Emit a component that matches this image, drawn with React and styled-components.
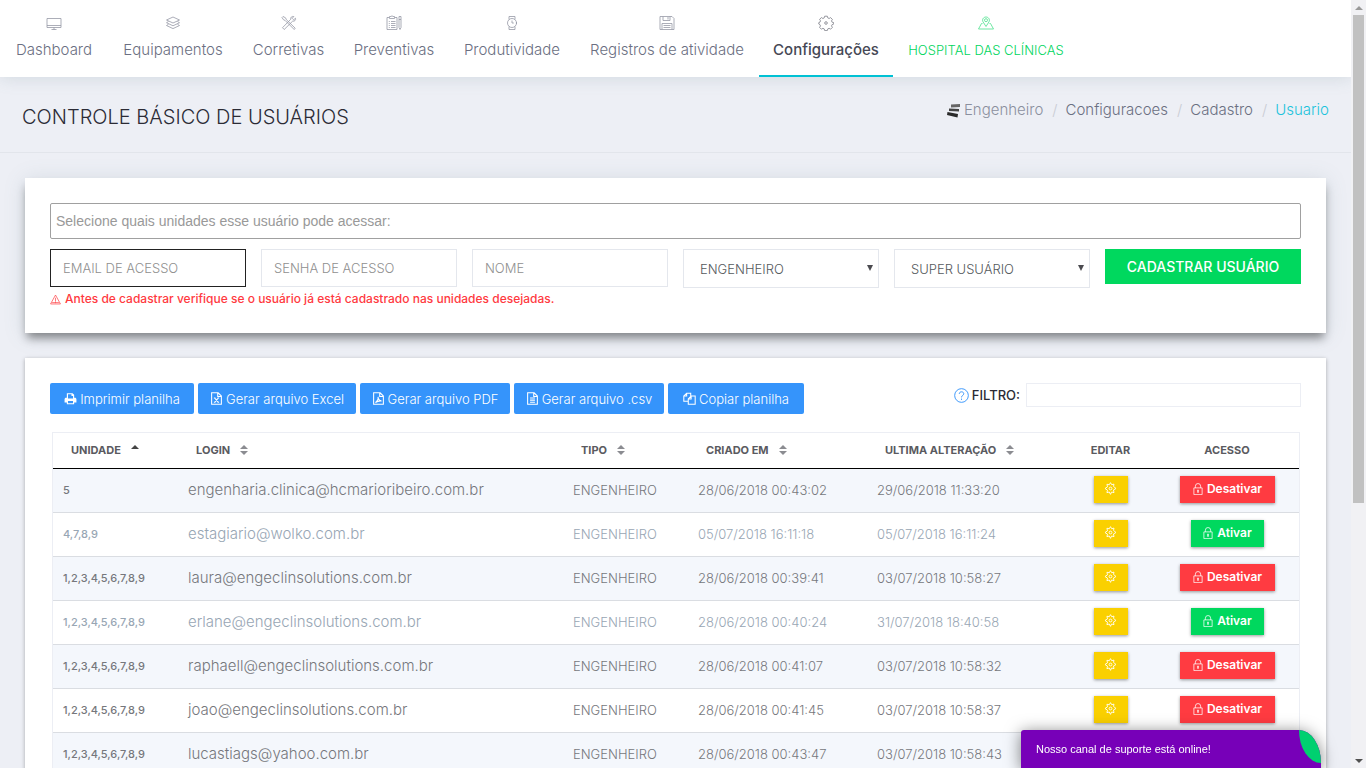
import React from 'react';
import styled, { createGlobalStyle } from 'styled-components';

const GlobalStyle = createGlobalStyle`
  * {
    box-sizing: border-box;
  }
  body {
    margin: 0;
    background: #edeff5;
    font-family: Inter, "Open Sans", sans-serif;
    font-weight: 300;
    color: #6b6f82;
  }
  button, input, select {
    font-family: inherit;
    margin: 0;
  }
`;

const Shell = styled.div`
  display: flex;
  height: 100vh;
  overflow: hidden;
`;

const Page = styled.div`
  flex: 1;
  min-width: 0;
  overflow: hidden;
`;

const NavBar = styled.nav`
  display: flex;
  background: #fff;
  box-shadow: 0 1px 16px rgba(100, 130, 140, 0.2);
`;

const NavItem = styled.a`
  display: flex;
  flex-direction: column;
  align-items: center;
  gap: 9px;
  width: ${props => props.$width}px;
  height: 77px;
  padding-top: 15px;
  border-bottom: 2px solid ${props => (props.$active ? '#00c1d4' : 'transparent')};
  color: ${props => (props.$green ? '#00d55d' : props.$active ? '#464855' : '#6b6f82')};
  font-size: ${props => (props.$green ? 13 : 15)}px;
  font-weight: ${props => (props.$active ? 500 : 300)};
  line-height: 20px;
  white-space: nowrap;
  text-decoration: none;

  svg {
    opacity: 0.7;
  }
`;

const PageHeader = styled.header`
  display: flex;
  justify-content: space-between;
  height: 76px;
  padding: 23px 22px 0;
  border-bottom: 1px solid #e2e5eb;
`;

const Title = styled.h1`
  margin: 2px 0 0;
  color: #2b2b35;
  font-size: 20px;
  font-weight: 300;
  line-height: 30px;
`;

const Crumbs = styled.ol`
  display: flex;
  align-items: center;
  height: 20px;
  margin: 0;
  padding: 0;
  list-style: none;
  font-size: 15px;
  line-height: 20px;
`;

const Crumb = styled.li`
  display: flex;
  align-items: center;
  gap: 4px;
  color: ${props => props.$color || '#6b6f82'};

  &:not(:first-child)::before {
    content: "/";
    padding: 0 4px 0 9px;
    color: #c9ccd4;
  }

  a {
    color: inherit;
    text-decoration: none;
  }
`;

const Main = styled.main`
  display: flex;
  flex-direction: column;
  gap: 25px;
  padding: 25px;
`;

const Card = styled.section`
  padding: 25px;
  background: #fff;
  box-shadow: ${props =>
    props.$raised
      ? '0 7px 9px -2px rgba(0, 0, 0, 0.42), 0 2px 20px rgba(100, 130, 140, 0.18)'
      : '0 1px 4px rgba(0, 0, 0, 0.3)'};
`;

const UnitsInput = styled.input`
  display: block;
  width: 100%;
  height: 36px;
  padding: 0 5px;
  border: 1px solid #a0a0a0;
  border-radius: 2px;
  font-family: "Liberation Sans", Arial, sans-serif;
  font-size: 14px;

  &::placeholder {
    color: #999;
  }
`;

const FormGrid = styled.div`
  display: grid;
  grid-template-columns: repeat(6, 1fr);
  align-items: start;
  gap: 15px;
  margin-top: 10px;
`;

const Field = styled.input`
  width: 100%;
  height: 38px;
  padding: 0 12px;
  border: 1px solid ${props => (props.$focused ? '#222' : '#e4e7ed')};
  outline: none;
  font-size: 13px;
  font-weight: 300;

  &::placeholder {
    color: #8f8f8f;
  }
`;

const SelectBox = styled.div`
  position: relative;

  &::after {
    content: "";
    position: absolute;
    top: 16px;
    right: 6px;
    border: solid transparent;
    border-width: 6px 3px 0;
    border-top-color: #4b4b50;
    pointer-events: none;
  }
`;

const Select = styled.select`
  width: 100%;
  height: 39px;
  padding: 0 16px;
  border: 1px solid #e4e7ed;
  border-radius: 0;
  background: #fff;
  appearance: none;
  color: #55595c;
  font-size: 13px;
  font-weight: 300;
`;

const SubmitButton = styled.button`
  height: 35px;
  padding: 0;
  border: 0;
  background: #00d85e;
  color: #fff;
  font-size: 14px;
  font-weight: 500;
  white-space: nowrap;
`;

const Warning = styled.p`
  display: flex;
  align-items: center;
  gap: 4px;
  margin: 3px 0 1px;
  color: #ff3a3f;
  font-size: 12px;
  font-weight: 500;
  line-height: 16px;
`;

const Toolbar = styled.div`
  display: flex;
  align-items: flex-start;
  justify-content: space-between;
`;

const Exports = styled.div`
  display: flex;
  gap: 4px;
`;

const ExportButton = styled.button`
  display: flex;
  align-items: center;
  justify-content: center;
  gap: 3px;
  min-width: ${props => props.$width}px;
  height: 31px;
  padding: 0;
  border: 0;
  border-radius: 2px;
  background: #3594fb;
  color: #fff;
  font-size: 13px;
  font-weight: 300;
  white-space: nowrap;
`;

const Filter = styled.label`
  display: flex;
  align-items: center;
  gap: 3px;
  color: #2b2b35;
  font-size: 13px;
  font-weight: 500;
`;

const FilterInput = styled.input`
  width: 275px;
  height: 24px;
  margin-left: 3px;
  border: 1px solid #eceef4;
`;

const Table = styled.table`
  width: calc(100% - 3px);
  margin: 18px 1px 0 2px;
  border: 1px solid #eceef4;
  border-spacing: 0;
  table-layout: fixed;
`;

const Th = styled.th`
  height: 36px;
  padding: 0 0 2px ${props => (props.$center ? 0 : 18)}px;
  border-bottom: 1px solid #000;
  color: #5a5a60;
  font-size: 11px;
  font-weight: 700;
  text-align: ${props => (props.$center ? 'center' : 'left')};
  white-space: nowrap;

  svg {
    margin-left: 10px;
    vertical-align: -1px;
  }
`;

const Row = styled.tr`
  background: ${props => (props.$striped ? '#f4f7fc' : '#fff')};
  color: ${props => (props.$muted ? '#98a6b4' : '#76777c')};
`;

const cellSizes = { small: 11, medium: 13, large: 15 };

const Td = styled.td`
  height: 44px;
  padding: 0 0 2px ${props => (props.$center ? 0 : 10)}px;
  border-bottom: 1px solid #dadde2;
  font-size: ${props => cellSizes[props.$size || 'medium']}px;
  font-weight: ${props => (props.$size === 'small' ? 500 : 300)};
  text-align: ${props => (props.$center ? 'center' : 'left')};
  white-space: nowrap;
`;

const ActionButton = styled.button`
  display: inline-flex;
  align-items: center;
  justify-content: center;
  gap: 3px;
  width: ${props => props.$width}px;
  height: 27px;
  padding: 0 0 2px;
  border: 0;
  background: ${props => props.$color};
  box-shadow: 0 1px 3px rgba(0, 0, 0, 0.4);
  color: #fff;
  font-size: 12px;
  font-weight: 600;
  vertical-align: middle;
`;

const ScrollTrack = styled.div`
  display: flex;
  flex-direction: column;
  align-items: center;
  justify-content: space-between;
  width: 15px;
  background: #f1f1f4;
`;

const ScrollThumb = styled.div`
  width: 11px;
  height: 63.5vh;
  background: #c1c1c1;
`;

const ScrollUpper = styled.div`
  display: flex;
  flex-direction: column;
  align-items: center;
`;

const ScrollArrow = styled.div`
  height: 15px;
  padding-top: 6px;

  &::before {
    content: "";
    display: block;
    border: solid transparent;
    border-width: ${props => (props.$down ? '4px 4px 0' : '0 4px 4px')};
    border-color: ${props =>
      props.$down ? '#505050 transparent transparent' : 'transparent transparent #999'};
  }
`;

const Chat = styled.aside`
  position: fixed;
  right: 45px;
  bottom: 0;
  width: 300px;
  height: 38px;
  padding-left: 15px;
  border-radius: 3px 22px 0 0 / 3px 33px 0 0;
  background: #7700b8;
  box-shadow: 0 2px 16px rgba(0, 0, 0, 0.5);
  color: #fff;
  font-family: "Liberation Sans", Arial, sans-serif;
  font-size: 11px;
  font-weight: 400;
  line-height: 38px;
`;

const ChatStatus = styled.span`
  position: absolute;
  top: 0;
  right: 0;
  width: 22px;
  height: 33px;
  border-radius: 0 100% 0 100%;
  background: #00d070;
`;

const Icon = ({ size = 16, children, ...rest }) => (
    <svg width={size} height={size} viewBox="0 0 16 16" fill="none" stroke="currentColor" strokeWidth="0.8" aria-hidden="true" {...rest}>
        {children}
    </svg>
);

const ICONS = {
    monitor: <path d="M1 3.5h14v9H1zM1 10.500h14M8 12.500v2M5.500 14.500h5" />,
    layers: <path d="M8 2l6.500 3L8 8 1.500 5zM3.500 6.500l-2 1.200L8 10.800l6.500-3.100-2-1.200M3.500 9.300l-2 1.200L8 13.600l6.500-3.100-2-1.200" />,
    tools: <path d="M2 1.500l2.500 1.300.8 1.800 8.900 8.600-1 1.300-9-9-1.800-.8L1 2.500zM14.500 3.200l-1.800 1.600-1.500-1.500L12.800 1.500c-2-.5-3.500 1-3 2.700L1.500 12.700l1.700 1.800 8.500-8.400c1.800.5 3.400-1 2.800-2.900z" />,
    clipboard: <path d="M3 2.500H1v12h10v-12H9M3.500 3.500v-2H5L6 .8l1 .7h1.500v2zM2.800 6.500h1M5 6.500h4.500M2.800 8.500h1M5 8.500h4.500M2.800 10.500h1M5 10.500h4.500M2.800 12.500h1M5 12.500h4.500M13 3.500v9l1 2 1-2v-11h-2zM13 4.500h2" />,
    watch: <g><circle cx="8" cy="8" r="4.500" /><path d="M5 4.500v-3h6v3M5 11.500v3h6v-3M8 5.500V8h1.800M12.500 7v2" /></g>,
    save: <path d="M1 1.500h12l2 2v11H1zM4 1.500v4h7v-4M9 2v2.500M3 14.500v-6h10v6M4.500 10.500h7M4.500 12.500h7" />,
    cog: <g><circle cx="8" cy="8" r="1.300" /><path d="M6.700 1.200h2.600l.5 1.700 1.300.6 1.500-.9 1.800 1.800-.9 1.500.6 1.300 1.700.5v1.300l-1.700.6-.6 1.300.9 1.500-1.800 1.800-1.500-.9-1.300.6-.5 1.700H6.700l-.5-1.700-1.300-.6-1.500.9-1.800-1.800.9-1.500-.6-1.300L.8 9V7.600l1.200-.5.5-1.300-.9-1.500 1.800-1.700 1.500.9 1.300-.6z" /></g>,
    map: <g><path d="M4.500 8.500h-1l-3 5.500h15l-3-5.500h-1M8 11.500L5 6.800C3.800 4.500 5.500 2 8 2s4.200 2.500 3 4.800z" /><circle cx="8" cy="5.200" r="1.500" /></g>,
    gear: <g><circle cx="8" cy="8" r="1.700" /><path d="M6.500 3.400L8 .8l1.500 2.600 2.800-.8-.6 2.800L14.800 8l-3.100 1.800.6 3.300-3-.8L8 15.200l-1.500-2.900-2.900.8.700-3.100L1.200 8l3.100-2-.7-3.200z" /></g>,
    lock: <path d="M2.500 6.500h11v9h-11zM4.500 6.500V4.200a3.500 3.500 0 0 1 7 0v2.300M7.300 9.500h1.400v1.200L8 13l-.7-2.300z" />,
    help: <g><circle cx="8" cy="8" r="7.300" /><path d="M5.600 6.300c0-3 4.800-2.900 4.800-.2C10.400 8 8 7.800 8 10M8 11.300v1.400" /></g>,
    warning: <path d="M8 1.500l7.200 13H.8zM8 5.500v5.700M8 12v1.300M3 12.500h10" />,
};

const FILE_ICONS = {
    print: (
        <path
            d="M3.500 1.500h7l2 2V7h1c1 0 1.800.8 1.800 1.800V13h-2.800v2h-9v-2H.7V8.800C.7 7.800 1.500 7 2.500 7h1zm1.400 1.300V8h6.200V4.900H9.200V2.800zM4.900 11v2.700h6.200V11z"
            fill="currentColor"
            fillRule="evenodd"
            stroke="none"
        />
    ),
    excel: <path d="M2 1h8l4 4v10H2zM9.500 1v4.500H14M4.800 7.500h2M9.200 7.500h2M4.800 12.500h2M9.200 12.500h2M6 7.500l4 5M10 7.500l-4 5" />,
    pdf: <path d="M2 1h8l4 4v10H2zM9.500 1v4.500H14M4.200 13C7.500 10.500 8 8 7.300 6c.7 3.500 2 5 4.500 5-2.500-.3-5.200.3-7.600 2z" />,
    text: <path d="M2 1h8l4 4v10H2zM9.500 1v4.500H14M5 7.500h6M5 10h6M5 12.500h6" />,
    copy: <path d="M6.500 11.500H1V5l3.500-3.500h5V5M4.500 1.500V5H1M6.500 8.500L10 5h5v10H6.500zM10 5v3.500H6.500" />,
};

const SortIcon = ({ asc }) => (
    <svg width="8" height="10" viewBox="0 0 8 10" fill={asc ? '#444' : '#8b8c91'} aria-hidden="true">
        <path d={asc ? 'M4 0l4 4H0z' : 'M4 0l4 4H0zM0 6h8l-4 4z'} />
    </svg>
);

const navItems = [
    { label: 'Dashboard', icon: 'monitor', width: 108 },
    { label: 'Equipamentos', icon: 'layers', width: 130 },
    { label: 'Corretivas', icon: 'tools', width: 101 },
    { label: 'Preventivas', icon: 'clipboard', width: 110 },
    { label: 'Produtividade', icon: 'watch', width: 126 },
    { label: 'Registros de atividade', icon: 'save', width: 184 },
    { label: 'Configurações', icon: 'cog', width: 134, active: true },
    { label: 'HOSPITAL DAS CLÍNICAS', icon: 'map', width: 186, green: true },
];

const exportButtons = [
    { label: 'Imprimir planilha', icon: 'print', width: 144 },
    { label: 'Gerar arquivo Excel', icon: 'excel', width: 158 },
    { label: 'Gerar arquivo PDF', icon: 'pdf', width: 150 },
    { label: 'Gerar arquivo .csv', icon: 'text', width: 150 },
    { label: 'Copiar planilha', icon: 'copy', width: 136 },
];

const ALL_UNITS = '1,2,3,4,5,6,7,8,9';

const users = [
    { units: '5', login: 'engenharia.clinica@hcmarioribeiro.com.br', created: '28/06/2018 00:43:02', updated: '29/06/2018 11:33:20', enabled: true },
    { units: '4,7,8,9', login: 'estagiario@wolko.com.br', created: '05/07/2018 16:11:18', updated: '05/07/2018 16:11:24', enabled: false },
    { units: ALL_UNITS, login: 'laura@engeclinsolutions.com.br', created: '28/06/2018 00:39:41', updated: '03/07/2018 10:58:27', enabled: true },
    { units: ALL_UNITS, login: 'erlane@engeclinsolutions.com.br', created: '28/06/2018 00:40:24', updated: '31/07/2018 18:40:58', enabled: false },
    { units: ALL_UNITS, login: 'raphaell@engeclinsolutions.com.br', created: '28/06/2018 00:41:07', updated: '03/07/2018 10:58:32', enabled: true },
    { units: ALL_UNITS, login: 'joao@engeclinsolutions.com.br', created: '28/06/2018 00:41:45', updated: '03/07/2018 10:58:37', enabled: true },
    { units: ALL_UNITS, login: 'lucastiags@yahoo.com.br', created: '28/06/2018 00:43:47', updated: '03/07/2018 10:58:43', enabled: true },
];

const UserRow = ({ user, striped }) => (
    <Row $striped={striped} $muted={!user.enabled}>
        <Td $size="small">{user.units}</Td>
        <Td $size="large">{user.login}</Td>
        <Td>ENGENHEIRO</Td>
        <Td>{user.created}</Td>
        <Td>{user.updated}</Td>
        <Td $center>
            <ActionButton $width={34} $color="#fad000" aria-label="Editar">
                <Icon size={13} strokeWidth="1.1">{ICONS.gear}</Icon>
            </ActionButton>
        </Td>
        <Td $center>
            <ActionButton $width={user.enabled ? 95 : 73} $color={user.enabled ? '#ff3b41' : '#00d85e'}>
                <Icon size={12} strokeWidth="1">{ICONS.lock}</Icon>
                {user.enabled ? 'Desativar' : 'Ativar'}
            </ActionButton>
        </Td>
    </Row>
);

const App = () => (
    <Shell>
        <GlobalStyle />
        <Page>
            <NavBar>
                {navItems.map(item => (
                    <NavItem key={item.label} href="#" $width={item.width} $active={item.active} $green={item.green}>
                        <Icon>{ICONS[item.icon]}</Icon>
                        {item.label}
                    </NavItem>
                ))}
            </NavBar>
            <PageHeader>
                <Title>CONTROLE BÁSICO DE USUÁRIOS</Title>
                <Crumbs>
                    <Crumb $color="#8b8f9e">
                        <svg width="13" height="15" viewBox="0 0 13 15" aria-hidden="true">
                            <path d="M4 1.500l9-.5v3l-9 .5z" fill="#666" />
                            <path d="M2 5.500l10 .5v2.500l-10-.5z" fill="#444" />
                            <path d="M.5 9l10.500 2-.5 3.500L0 12z" fill="#2a2a2a" />
                        </svg>
                        Engenheiro
                    </Crumb>
                    <Crumb><a href="#">Configuracoes</a></Crumb>
                    <Crumb><a href="#">Cadastro</a></Crumb>
                    <Crumb $color="#1cc3dc"><a href="#">Usuario</a></Crumb>
                </Crumbs>
            </PageHeader>
            <Main>
                <Card $raised>
                    <UnitsInput aria-label="Unidades" placeholder="Selecione quais unidades esse usuário pode acessar:" />
                    <FormGrid>
                        <Field $focused type="email" aria-label="Email de acesso" placeholder="EMAIL DE ACESSO" />
                        <Field type="password" aria-label="Senha de acesso" placeholder="SENHA DE ACESSO" />
                        <Field aria-label="Nome" placeholder="NOME" />
                        <SelectBox>
                            <Select aria-label="Tipo"><option>ENGENHEIRO</option></Select>
                        </SelectBox>
                        <SelectBox>
                            <Select aria-label="Perfil"><option>SUPER USUÁRIO</option></Select>
                        </SelectBox>
                        <SubmitButton>CADASTRAR USUÁRIO</SubmitButton>
                    </FormGrid>
                    <Warning>
                        <Icon size={11} strokeWidth="1">{ICONS.warning}</Icon>
                        Antes de cadastrar verifique se o usuário já está cadastrado nas unidades desejadas.
                    </Warning>
                </Card>
                <Card>
                    <Toolbar>
                        <Exports>
                            {exportButtons.map(button => (
                                <ExportButton key={button.label} $width={button.width}>
                                    <Icon size={13} strokeWidth="1.3">{FILE_ICONS[button.icon]}</Icon>
                                    {button.label}
                                </ExportButton>
                            ))}
                        </Exports>
                        <Filter>
                            <Icon size={15} strokeWidth="1" color="#3594fb">{ICONS.help}</Icon>
                            FILTRO:
                            <FilterInput type="search" />
                        </Filter>
                    </Toolbar>
                    <Table>
                        <colgroup>
                            <col width="125" />
                            <col />
                            <col width="125" />
                            <col width="179" />
                            <col width="199" />
                            <col width="89" />
                            <col width="144" />
                        </colgroup>
                        <thead>
                            <tr>
                                <Th>UNIDADE<SortIcon asc /></Th>
                                <Th>LOGIN<SortIcon /></Th>
                                <Th>TIPO<SortIcon /></Th>
                                <Th>CRIADO EM<SortIcon /></Th>
                                <Th>ULTIMA ALTERAÇÃO<SortIcon /></Th>
                                <Th $center>EDITAR</Th>
                                <Th $center>ACESSO</Th>
                            </tr>
                        </thead>
                        <tbody>
                            {users.map((user, i) => (
                                <UserRow key={user.login} user={user} striped={i % 2 === 0} />
                            ))}
                        </tbody>
                    </Table>
                </Card>
            </Main>
        </Page>
        <ScrollTrack>
            <ScrollUpper>
                <ScrollArrow />
                <ScrollThumb />
            </ScrollUpper>
            <ScrollArrow $down />
        </ScrollTrack>
        <Chat>
            Nosso canal de suporte está online!
            <ChatStatus />
        </Chat>
    </Shell>
);

export default App;
